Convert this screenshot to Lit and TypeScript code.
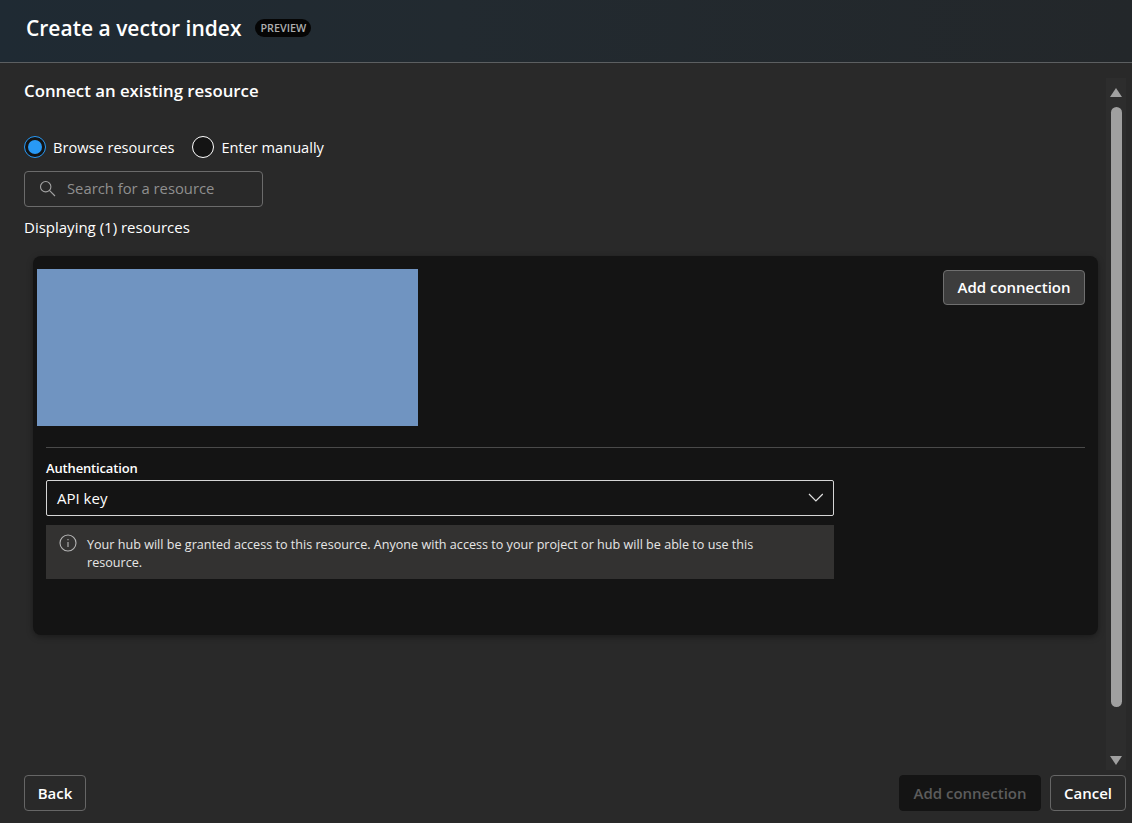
import {html, css, LitElement} from 'lit';
import {customElement} from 'lit/decorators.js';

@customElement('app-root')
export class AppRoot extends LitElement {
  static styles = css`
    :host {
      display: flex;
      flex-direction: column;
      width: 1132px;
      height: 823px;
      overflow: hidden;
      background: #292929;
      color: #fff;
      font-family: "Open Sans", "Noto Sans", sans-serif;
      font-size: 14.6px;
    }

    .header {
      display: flex;
      align-items: center;
      gap: 14px;
      box-sizing: border-box;
      padding: 0 26px 7px;
      border-bottom: 1px solid #5c5f61;
      flex: none;
      height: 63px;
      background: linear-gradient(90deg, #1f2a33 0%, #222a30 40%, #23272a 100%);
    }

    .header h1 {
      margin: 0;
      font-size: 21px;
      font-weight: 600;
    }

    .badge {
      background: #050505;
      color: #adadad;
      font-size: 10.8px;
      font-weight: 600;
      line-height: 18px;
      padding: 0 5px;
      border-radius: 9px;
    }

    .middle {
      flex: 1;
      display: flex;
      min-height: 0;
    }

    .content {
      flex: 1;
      padding: 17px 8px 0 24px;
      min-width: 0;
    }

    .content h2 {
      margin: 0;
      font-size: 16.8px;
      line-height: 22px;
      font-weight: 600;
    }

    .radios {
      display: flex;
      align-items: center;
      margin-top: 33px;
      height: 24px;
    }

    .radio {
      display: flex;
      align-items: center;
      gap: 7px;
      margin-right: 18px;
    }

    .dot {
      width: 22px;
      height: 22px;
      box-sizing: border-box;
      border-radius: 50%;
      border: 1px solid #fff;
      background: #141414;
      display: flex;
      align-items: center;
      justify-content: center;
    }

    .dot.on {
      border-color: #2899f5;
    }

    .dot.on::after {
      content: '';
      width: 14px;
      height: 14px;
      border-radius: 50%;
      background: #2899f5;
    }

    .search {
      display: flex;
      align-items: center;
      gap: 11px;
      width: 239px;
      height: 36px;
      box-sizing: border-box;
      margin-top: 12px;
      padding: 0 14px 2px;
      border: 1px solid #6b6b6b;
      border-radius: 4px;
      color: #8f8f8f;
      font-size: 14.8px;
    }

    .shown {
      margin-top: 10px;
      height: 21px;
      line-height: 20px;
      font-size: 15px;
    }

    .card {
      margin: 18px 0 0 9px;
      height: 379px;
      box-sizing: border-box;
      padding: 13px 13px 0 4px;
      background: #141414;
      border-radius: 8px;
      box-shadow: 0 2px 6px rgba(0, 0, 0, 0.35);
    }

    .top {
      display: flex;
      justify-content: space-between;
      align-items: flex-start;
    }

    .blank {
      width: 381px;
      height: 157px;
      background: #7094c1;
    }

    .btn {
      display: inline-flex;
      align-items: center;
      justify-content: center;
      box-sizing: border-box;
      height: 36px;
      border: 1px solid #666;
      border-radius: 4px;
      background: transparent;
      color: #fff;
      font: inherit;
      font-size: 15px;
      font-weight: 600;
      padding: 0 0 1px;
    }

    .add {
      width: 142px;
      height: 35px;
      margin-top: 1px;
      padding-bottom: 2px;
      background: #3d3d3d;
      border-color: #6f6f6f;
    }

    .lower {
      margin-left: 9px;
    }

    .lower hr {
      margin: 21px 0 0;
      border: none;
      border-top: 1px solid #4a4a4a;
    }

    .label {
      margin-top: 10px;
      height: 22px;
      font-size: 13px;
      font-weight: 600;
      line-height: 20px;
      letter-spacing: -0.15px;
    }

    .select {
      display: flex;
      align-items: center;
      justify-content: space-between;
      width: 788px;
      height: 36px;
      box-sizing: border-box;
      padding: 0 10px;
      border: 1px solid #d6d6d6;
      border-radius: 2px;
      font-size: 15px;
    }

    .info {
      display: flex;
      gap: 10px;
      width: 788px;
      height: 54px;
      box-sizing: border-box;
      margin-top: 9px;
      padding: 9px 60px 0 13px;
      background: #333231;
      font-size: 12.6px;
      line-height: 18px;
      color: #e6e6e6;
    }

    .info svg {
      flex: none;
    }

    .info span {
      padding-top: 2px;
    }

    .scroll {
      flex: none;
      width: 20px;
      margin: 15px 6px 0 0;
      background: #2d2d2d;
      display: flex;
      flex-direction: column;
      align-items: center;
    }

    .arrow-up,
    .arrow-down {
      width: 0;
      height: 0;
      border-left: 6px solid transparent;
      border-right: 6px solid transparent;
      flex: none;
    }

    .arrow-up {
      margin-top: 10px;
      border-bottom: 9px solid #a0a0a0;
    }

    .arrow-down {
      margin-top: 49px;
      border-top: 9px solid #a0a0a0;
    }

    .thumb {
      width: 11px;
      height: 600px;
      margin-top: 10px;
      border-radius: 6px;
      background: #a0a0a0;
      flex: none;
    }

    .footer {
      flex: none;
      height: 53px;
      box-sizing: border-box;
      display: flex;
      align-items: flex-start;
      padding: 5px 6px 0 24px;
    }

    .back {
      width: 62px;
    }

    .spacer {
      flex: 1;
    }

    .submit {
      width: 142px;
      margin-right: 9px;
      background: #141414;
      border-color: #141414;
      color: #5c5c5c;
    }

    .cancel {
      width: 76px;
    }
  `;

  render() {
    return html`
      <div class="header">
        <h1>Create a vector index</h1>
        <span class="badge">PREVIEW</span>
      </div>
      <div class="middle">
        <div class="content">
          <h2>Connect an existing resource</h2>
          <div class="radios">
            <div class="radio"><span class="dot on"></span>Browse resources</div>
            <div class="radio"><span class="dot"></span>Enter manually</div>
          </div>
          <div class="search">
            <svg width="17" height="17" viewBox="0 0 17 17" fill="none" stroke="#a3a3a3" stroke-width="1.1">
              <circle cx="6.7" cy="6.7" r="5.2"></circle>
              <path d="M10.4 10.4L16 16"></path>
            </svg>
            Search for a resource
          </div>
          <div class="shown">Displaying (1) resources</div>
          <div class="card">
            <div class="top">
              <div class="blank"></div>
              <button class="btn add">Add connection</button>
            </div>
            <div class="lower">
              <hr />
              <div class="label">Authentication</div>
              <div class="select">
                API key
                <svg width="16" height="16" viewBox="0 0 16 16" fill="none" stroke="#e0e0e0" stroke-width="1.2">
                  <path d="M2 4L8.9 11L15.8 4"></path>
                </svg>
              </div>
              <div class="info">
                <svg width="18" height="18" viewBox="0 0 18 18" fill="none" stroke="#b5b5b5" stroke-width="1.1">
                  <circle cx="9" cy="9" r="8"></circle>
                  <path d="M9 8V13M9 5V6.2"></path>
                </svg>
                <span>Your hub will be granted access to this resource. Anyone with access to your project or hub will be able to use this resource.</span>
              </div>
            </div>
          </div>
        </div>
        <div class="scroll">
          <div class="arrow-up"></div>
          <div class="thumb"></div>
          <div class="arrow-down"></div>
        </div>
      </div>
      <div class="footer">
        <button class="btn back">Back</button>
        <div class="spacer"></div>
        <button class="btn submit">Add connection</button>
        <button class="btn cancel">Cancel</button>
      </div>
    `;
  }
}
